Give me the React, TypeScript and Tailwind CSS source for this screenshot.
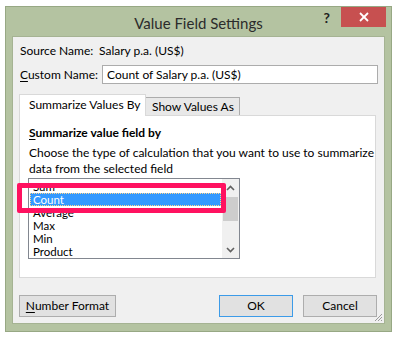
import React from 'react'

const font = { fontFamily: 'Lato, "Noto Sans", sans-serif' }

const items = ['Sum', 'Count', 'Average', 'Max', 'Min', 'Product']

function Chevron({ up }: { up?: boolean }) {
  return (
    <svg width="9" height="6" viewBox="0 0 9 6" fill="none" stroke="#606060" strokeWidth="1.6">
      {up ? <polyline points="1,5 4.5,1.5 8,5" /> : <polyline points="1,1 4.5,4.5 8,1" />}
    </svg>
  )
}

export default function App() {
  return (
    <div className="w-[397px] h-[338px] bg-white pt-[6px] pl-[5px] text-[12px] text-black whitespace-nowrap" style={font}>
      <div className="w-[387px] h-[326px] border border-[#97a884] bg-[#b4c3a1] flex flex-col">
        {/* title bar */}
        <div className="h-[29px] grid grid-cols-[1fr_auto_1fr]">
          <div />
          <div className="pt-[5px] text-[15px] leading-[22px] text-[#2b2b2b]">Value Field Settings</div>
          <div className="flex justify-end items-start pr-[5px]">
            <span className="mt-[3px] mr-[11px] text-[14px] font-bold leading-[16px] text-[#222]">?</span>
            <div className="w-[45px] h-[20px] bg-[#c75050] flex items-center justify-center">
              <svg width="10" height="10" viewBox="0 0 10 10" stroke="white" strokeWidth="1.8">
                <line x1="1" y1="1" x2="9" y2="9" />
                <line x1="9" y1="1" x2="1" y2="9" />
              </svg>
            </div>
          </div>
        </div>

        {/* client area */}
        <div className="mx-[6px] h-[288px] border border-[#a5b393] bg-[#f0f0f0] flex flex-col relative">
          <div className="mt-[6px] h-[16px] leading-[16px] pl-[7px] flex">
            <span className="w-[79px]">Source Name:</span>
            <span>Salary p.a. (US$)</span>
          </div>

          <div className="mt-[6px] h-[19px] pl-[7px] flex items-center">
            <span className="w-[82px]">
              <span className="underline underline-offset-2">C</span>ustom Name:
            </span>
            <div className="w-[276px] h-[19px] border border-[#acacac] bg-white pl-[4px] leading-[17px]">
              Count of Salary p.a. (US$)
            </div>
          </div>

          {/* tabs */}
          <div className="mt-[9px] ml-[6px] w-[357px] flex flex-col">
            <div className="flex items-end h-[22px]">
              <div className="relative z-10 -mb-px w-[127px] h-[22px] border border-b-0 border-[#d9d9d9] bg-white pl-[9px] leading-[20px]">
                Summarize Values By
              </div>
              <div className="w-[94px] h-[18px] border border-l-0 border-b-0 border-[#acacac] bg-[#e8e8e8] pl-[6px] leading-[18px]">
                Show Values As
              </div>
            </div>
            <div className="h-[163px] border border-[#d9d9d9] bg-white flex flex-col">
              <div className="mt-[9px] pl-[9px] h-[16px] leading-[16px] font-bold">
                <span className="underline underline-offset-2">S</span>ummarize value field by
              </div>
              <div className="mt-[4px] pl-[9px] leading-[16px]">
                Choose the type of calculation that you want to use to summarize
                <br />
                data from the selected field
              </div>
              <div className="mt-[1px] ml-[8px] w-[212px] h-[81px] border border-[#828790] bg-white flex">
                <div className="flex-1 pt-[1px] px-[1px] flex flex-col text-[11.5px]">
                  {items.map((it) =>
                    it === 'Count' ? (
                      <div
                        key={it}
                        className="h-[13px] bg-[#3399ff] text-white border border-dotted border-[#ffd58a] pl-[2px] leading-[11px]"
                      >
                        {it}
                      </div>
                    ) : (
                      <div key={it} className="h-[13px] pl-[3px] leading-[13px]">
                        {it}
                      </div>
                    )
                  )}
                </div>
                <div className="w-[17px] bg-[#f0f0f0] flex flex-col items-center">
                  <div className="h-[17px] flex items-center justify-center">
                    <Chevron up />
                  </div>
                  <div className="w-[15px] h-[24px] bg-[#cdcdcd] mt-[1px]" />
                  <div className="flex-1" />
                  <div className="h-[17px] flex items-center justify-center">
                    <Chevron />
                  </div>
                </div>
              </div>
            </div>
          </div>

          {/* buttons */}
          <div className="mt-[17px] ml-[6px] w-[358px] h-[22px] flex">
            <div className="w-[97px] h-[22px] border border-[#adadad] bg-[#e1e1e1] flex items-center justify-center">
              <span>
                <span className="underline underline-offset-2">N</span>umber Format
              </span>
            </div>
            <div className="flex-1" />
            <div className="w-[74px] h-[22px] border border-[#3c9be8] bg-[#e1e1e1] flex items-center justify-center">OK</div>
            <div className="ml-[10px] w-[74px] h-[22px] border border-[#adadad] bg-[#e1e1e1] flex items-center justify-center">
              Cancel
            </div>
          </div>

          {/* resize grip */}
          <svg className="absolute right-[1px] bottom-[1px]" width="11" height="11" viewBox="0 0 11 11" stroke="#9a9a9a" strokeWidth="1">
            <line x1="10" y1="3" x2="3" y2="10" />
            <line x1="10" y1="6" x2="6" y2="10" />
            <line x1="10" y1="9" x2="9" y2="10" />
          </svg>

          {/* pink annotation box */}
          <div className="absolute left-[4px] top-[146px] w-[209px] h-[30px] border-[5px] border-[#ff1160] rounded-[2px]" />
        </div>
      </div>
    </div>
  )
}
